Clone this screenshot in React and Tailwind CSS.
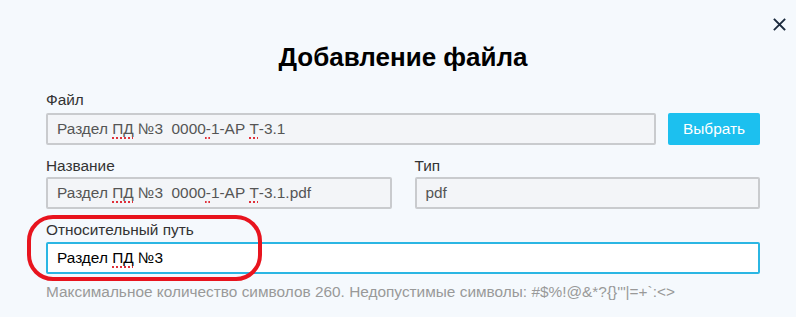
import React from "react";

const Sp = ({ children }) => (
  <span className="underline decoration-dotted decoration-[#e0303a] decoration-2 underline-offset-[3px]">{children}</span>
);

export default function App() {
  return (
    <div className="relative w-[796px] h-[317px] overflow-hidden bg-[#f5f9fd] font-['Liberation_Sans',Arial,sans-serif]">
      <button className="absolute right-[10px] top-[17px] w-[14px] h-[14px] flex items-center justify-center">
        <svg width="13" height="13" viewBox="0 0 13 13">
          <path d="M1.5 1.5 L11.5 11.5 M11.5 1.5 L1.5 11.5" stroke="#1c2b3e" strokeWidth="1.8" strokeLinecap="square" />
        </svg>
      </button>
      <div className="pl-[46px] pr-[36px] pt-[42px]">
        <h1 className="text-center text-[26px] leading-[30px] font-bold text-black">Добавление файла</h1>
        <div className="mt-[20px] text-[15.4px] leading-[16px] text-[#333]">Файл</div>
        <div className="mt-[5px] flex gap-[12px]">
          <div className="flex-1 h-[32px] border-2 border-[#c9cbce] rounded-[2px] bg-[#f3f5f8] px-[9px] flex items-center text-[15.4px] text-[#555] whitespace-pre">
            Раздел <Sp>ПД</Sp> №3  0000<Sp>-</Sp>1-АР <Sp>Т</Sp>-3.1
          </div>
          <button className="w-[92px] h-[32px] rounded-[2px] bg-[#1cc0ef] text-white text-[15.4px] flex items-center justify-center">Выбрать</button>
        </div>
        <div className="mt-[13px] grid grid-cols-2 gap-x-[23px]">
          <div>
            <div className="text-[15.4px] leading-[16px] text-[#333]">Название</div>
            <div className="mt-[3px] h-[32px] border-2 border-[#c9cbce] rounded-[2px] bg-[#f3f5f8] px-[9px] flex items-center text-[15.4px] text-[#555] whitespace-pre">
              Раздел <Sp>ПД</Sp> №3  0000<Sp>-</Sp>1-АР <Sp>Т</Sp>-3.1.pdf
            </div>
          </div>
          <div>
            <div className="text-[15.4px] leading-[16px] text-[#333]">Тип</div>
            <div className="mt-[3px] h-[32px] border-2 border-[#c9cbce] rounded-[2px] bg-[#f3f5f8] px-[9px] flex items-center text-[15.4px] text-[#555]">
              pdf
            </div>
          </div>
        </div>
        <div className="mt-[13px] text-[15.4px] leading-[16px] text-[#333]">Относительный путь</div>
        <div className="mt-[4px] h-[32px] border-2 border-[#2bb6e3] rounded-[2px] bg-white px-[9px] flex items-center text-[15.4px] text-black whitespace-pre">
          Раздел <Sp>ПД</Sp> №3
        </div>
        <div className="mt-[10px] text-[15.4px] leading-[16px] text-[#999]">
          Максимальное количество символов 260. Недопустимые символы: #$%!@&amp;*?{"{}"}'"|=+`:&lt;&gt;
        </div>
      </div>
      <div className="absolute left-[27px] top-[215px] w-[235px] h-[66px] border-4 border-[#e8141e] rounded-[26px] pointer-events-none" />
    </div>
  );
}
